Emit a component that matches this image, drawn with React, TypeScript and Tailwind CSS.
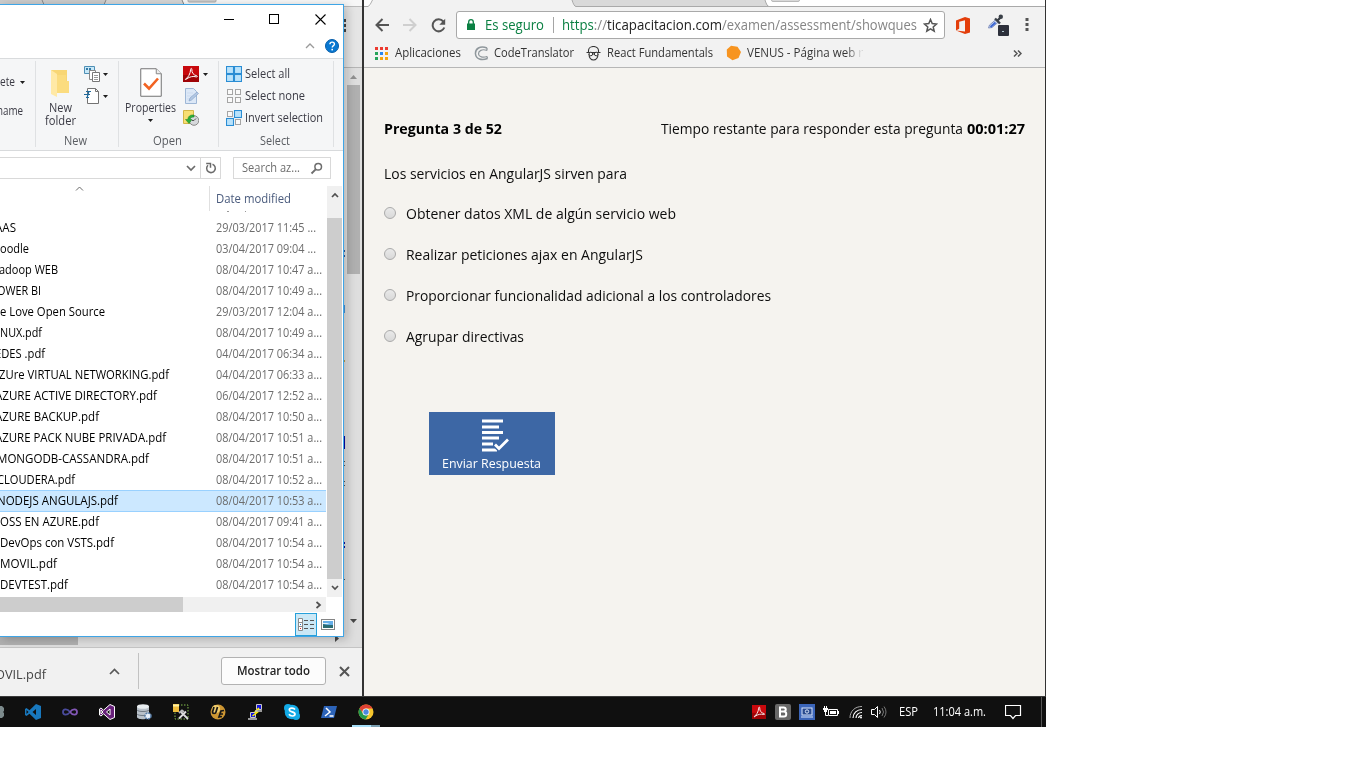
import React, { useLayoutEffect, useRef } from "react";

/* One line of text condensed or widened to fill its box. */
function T({ className = "", children }: { className?: string; children: React.ReactNode }) {
  const box = useRef<HTMLSpanElement>(null);
  const inner = useRef<HTMLSpanElement>(null);
  useLayoutEffect(() => {
    const b = box.current;
    const i = inner.current;
    if (!b || !i) return;
    i.style.transform = "none";
    const n = i.getBoundingClientRect().width;
    if (n > 0) i.style.transform = `scaleX(${b.getBoundingClientRect().width / n})`;
  });
  return (
    <span ref={box} className={`block shrink-0 whitespace-nowrap ${className}`}>
      <span ref={inner} className="inline-block origin-left align-top">{children}</span>
    </span>
  );
}

type Row = { name: string; cls: string; date: string; short?: boolean; selected?: boolean };

const rows: Row[] = [
  { name: "AAS", cls: "-ml-[5px] w-[21px]", date: "29/03/2017 11:45 ...", short: true },
  { name: "oodle", cls: "w-[29px]", date: "03/04/2017 09:04 ...", short: true },
  { name: "adoop WEB", cls: "-ml-[1px] w-[59px]", date: "08/04/2017 10:47 a..." },
  { name: "OWER BI", cls: "-ml-[3px] w-[44px]", date: "08/04/2017 10:49 a..." },
  { name: "e Love Open Source", cls: "w-[105px]", date: "29/03/2017 12:04 a..." },
  { name: "INUX.pdf", cls: "-ml-[3px] w-[45px]", date: "08/04/2017 10:49 a..." },
  { name: "EDES .pdf", cls: "-ml-[5px] w-[50px]", date: "04/04/2017 06:34 a..." },
  { name: "ZUre VIRTUAL NETWORKING.pdf", cls: "-ml-[1px] w-[170px]", date: "04/04/2017 06:33 a..." },
  { name: "AZURE ACTIVE DIRECTORY.pdf", cls: "-ml-[5px] w-[162px]", date: "06/04/2017 12:52 a..." },
  { name: "AZURE BACKUP.pdf", cls: "-ml-[5px] w-[104px]", date: "08/04/2017 10:50 a..." },
  { name: "AZURE PACK NUBE PRIVADA.pdf", cls: "-ml-[5px] w-[171px]", date: "08/04/2017 10:51 a..." },
  { name: "MONGODB-CASSANDRA.pdf", cls: "-ml-[3px] w-[152px]", date: "08/04/2017 10:51 a..." },
  { name: "CLOUDERA.pdf", cls: "-ml-[3px] w-[78px]", date: "08/04/2017 10:52 a..." },
  { name: "NODEJS ANGULAJS.pdf", cls: "-ml-[3px] w-[121px]", date: "08/04/2017 10:53 a...", selected: true },
  { name: "OSS EN AZURE.pdf", cls: "w-[99px]", date: "08/04/2017 09:41 a..." },
  { name: "DevOps con VSTS.pdf", cls: "w-[114px]", date: "08/04/2017 10:54 a..." },
  { name: "MOVIL.pdf", cls: "w-[57px]", date: "08/04/2017 10:54 a..." },
  { name: "DEVTEST.pdf", cls: "w-[68px]", date: "08/04/2017 10:54 a..." },
];

function Caret({ className = "" }: { className?: string }) {
  return (
    <svg className={`shrink-0 ${className}`} width="5" height="3" viewBox="0 0 5 3">
      <path d="M0 0h5L2.5 3z" fill="#1e1e1e" />
    </svg>
  );
}

function PdfIcon({ size = 16 }: { size?: number }) {
  return (
    <svg className="shrink-0" width={size} height={size} viewBox="0 0 16 16">
      <rect width="16" height="16" fill="#c8090d" />
      <rect y="9" width="16" height="7" fill="#9f0306" />
      <path d="M2.4 13.2c2.8-1.6 5-5.500 5.200-9.600.1-1.700 1.400-1.500 1.300.1-.3 2.700 1.500 5.500 4.900 6.100 1 .3.600 1.400-.5 1.100-3.200-1-6.700-.2-9.300 1.800-1 .9-2.100.9-1.600.5Z" fill="none" stroke="#fff" strokeWidth="1" />
    </svg>
  );
}

function SelectIcon({ kind }: { kind: "all" | "none" | "invert" }) {
  const on = [kind === "all", kind !== "none", kind !== "none", kind === "all"];
  return (
    <svg className="shrink-0" width="16" height="16" viewBox="0 0 16 16">
      {on.map((v, i) => {
        const x = (i % 2) * 8;
        const y = Math.floor(i / 2) * 8;
        return v ? (
          <rect key={i} x={x + 0.5} y={y + 0.5} width="7" height="7" fill="#b9e2fb" stroke="#2a8dd4" strokeWidth="1.100" />
        ) : (
          <rect key={i} x={x + 1.5} y={y + 1.5} width="5" height="5" fill="#fafafa" stroke="#a5a5a5" />
        );
      })}
    </svg>
  );
}

function Ribbon() {
  return (
    <div className="flex h-[92px] shrink-0 border-b border-[#d8dadc] bg-[#f5f6f7] pt-[2px] text-[12px] leading-[16px] text-[#3b3b45]">
      <div className="h-[86px] w-[36px] shrink-0 border-r border-[#dfe1e3] pt-[13px]">
        <div className="flex items-center">
          <T className="w-[15px]">ete</T>
          <Caret className="ml-[5px]" />
        </div>
        <T className="mt-[13px] -ml-[3px] w-[26px]">name</T>
      </div>
      <div className="flex h-[86px] w-[83px] shrink-0 flex-col border-r border-[#dfe1e3]">
        <div className="flex h-[72px] shrink-0">
          <div className="flex w-[48px] flex-col items-center pt-[8px]">
            <svg className="shrink-0" width="20" height="29" viewBox="0 0 20 29">
              <path d="M1 1h16v11h2v12H1z" fill="#f8d675" />
              <path d="M1 1l6 4v23l-6-3z" fill="#ffe9a6" />
              <path d="M7 6h9v6h3v12H7z" fill="#fbdc7f" />
            </svg>
            <T className="mt-[3px] w-[23px] leading-[13px]">New</T>
            <T className="w-[31px] leading-[13px]">folder</T>
          </div>
          <div className="flex flex-col gap-[6px] pt-[5px]">
            <div className="flex items-center gap-[3px]">
              <svg width="16" height="16" viewBox="0 0 16 16">
                <path d="M.5.5h10v7H.5z" fill="#c7e8f8" stroke="#4e8fb5" />
                <path d="M2 3h2M6 2v3" stroke="#347ba7" strokeWidth="2" />
                <path d="M5.500 4.500h6v9h-6z" fill="#fff" stroke="#888" />
                <path d="M8.500 6.500h7v9h-7z" fill="#fff" stroke="#777" />
                <path d="M10 9.500h4M10 11.500h4M10 13.500h4" stroke="#999" />
              </svg>
              <Caret />
            </div>
            <div className="flex items-center gap-[3px]">
              <svg width="16" height="16" viewBox="0 0 16 16">
                <path d="M3.500.5h8l3 3v12h-11z" fill="#fff" stroke="#737373" />
                <path d="M11.500.5v3h3" fill="none" stroke="#737373" />
                <path d="M2 3.500h5M0 6.500h6M2 9.500h3M5 3l-2 7" stroke="#20699a" strokeWidth="1.200" />
              </svg>
              <Caret />
            </div>
          </div>
        </div>
        <T className="ml-[28px] w-[23px] text-[#5a5d62]">New</T>
      </div>
      <div className="flex h-[86px] w-[100px] shrink-0 flex-col border-r border-[#dfe1e3]">
        <div className="flex h-[72px] shrink-0">
          <div className="flex w-[64px] flex-col items-center pt-[7px] pr-[1px]">
            <svg className="shrink-0" width="22" height="29" viewBox="0 0 22 29">
              <path d="M.75.75h15.500l5 5v22.500H.75z" fill="#fff" stroke="#737373" />
              <path d="M16.250.75v5h5" fill="#eee" stroke="#888" />
              <path d="M4 15.500l5 5L18 10.500" fill="none" stroke="#f26322" strokeWidth="2.600" />
            </svg>
            <T className="mt-[3px] w-[51px]">Properties</T>
            <Caret className="mt-[3px]" />
          </div>
          <div className="flex flex-col gap-[6px] pt-[5px]">
            <div className="flex items-center gap-[4px]">
              <PdfIcon />
              <Caret />
            </div>
            <svg width="16" height="16" viewBox="0 0 16 16">
              <path d="M2.500.5h8l3 3v12h-11z" fill="#dce8f7" stroke="#9eb7d6" />
              <path d="M4 5h6M4 8h5M4 11h3" stroke="#cddbef" />
              <path d="M6 13l1-3 7-6 1.500 1.500L8.500 12z" fill="#b3c8e4" stroke="#89a5c8" strokeWidth=".7" />
            </svg>
            <svg width="16" height="16" viewBox="0 0 16 16">
              <path d="M.5.5h10v13H.5z" fill="#f7df73" stroke="#d4b646" />
              <circle cx="11" cy="10.500" r="4.800" fill="#d6d9dc" stroke="#888" />
              <path d="M11 10.500l2-2M11 10.500H9" stroke="#555" />
              <path d="M11 5C7 4.500 5 6.500 4.800 9.500H2.500l3.500 4 3-4H7.200c0-1.700 1.500-2.500 3.800-2.500z" fill="#2dae3a" stroke="#148122" strokeWidth=".5" />
            </svg>
          </div>
        </div>
        <T className="ml-[34px] w-[29px] text-[#5a5d62]">Open</T>
      </div>
      <div className="h-[86px] w-[115px] shrink-0 border-r border-[#dfe1e3] pl-[7px]">
        <div className="flex h-[72px] flex-col gap-[6px] pt-[5px]">
          <div className="flex items-center gap-[3px]"><SelectIcon kind="all" /><T className="w-[45px]">Select all</T></div>
          <div className="flex items-center gap-[3px]"><SelectIcon kind="none" /><T className="w-[60px]">Select none</T></div>
          <div className="flex items-center gap-[3px]"><SelectIcon kind="invert" /><T className="w-[78px]">Invert selection</T></div>
        </div>
        <T className="ml-[34px] w-[30px] text-[#5a5d62]">Select</T>
      </div>
    </div>
  );
}

function Explorer() {
  return (
    <div className="absolute top-[4px] left-0 flex h-[633px] w-[344px] flex-col overflow-hidden border-y border-r border-[#3fa5e6] bg-white shadow-[3px_2px_9px_rgba(0,0,0,0.22)]">
      <div className="flex h-[29px] shrink-0 justify-end pt-[8px] pr-[16px]">
        <svg width="103" height="13" viewBox="0 0 103 13">
          <path d="M0 6.500h10" stroke="#000" />
          <rect x="45.500" y="1.500" width="9" height="9" fill="none" stroke="#000" />
          <path d="M91.500 1.500l10 10M101.500 1.500l-10 10" stroke="#000" strokeWidth="1.100" />
        </svg>
      </div>
      <div className="flex h-[25px] shrink-0 items-center justify-end gap-[10px] border-b border-[#d9dbdd] pr-[4px]">
        <svg width="10" height="6" viewBox="0 0 10 6"><path d="M1 5l4-4 4 4" fill="none" stroke="#9a9a9a" strokeWidth="1.300" /></svg>
        <svg width="14" height="14" viewBox="0 0 14 14">
          <circle cx="7" cy="7" r="6.500" fill="#0878d2" stroke="#075da8" />
          <path d="M4.900 5.200c.2-2.800 4.500-2.700 4.500 0C9.400 6.700 7.200 6.700 7.200 8.600" fill="none" stroke="#fff" strokeWidth="1.400" />
          <rect x="6.400" y="9.800" width="1.600" height="1.600" fill="#fff" />
        </svg>
      </div>
      <Ribbon />
      <div className="flex h-[35px] shrink-0 pt-[6px]">
        <div className="flex h-[22px] w-[221px] border-y border-r border-[#d9d9d9]">
          <div className="flex w-[201px] items-center justify-end border-r border-[#d9d9d9] pr-[4px]">
            <svg width="10" height="7" viewBox="0 0 10 7"><path d="M1 1l4 4 4-4" fill="none" stroke="#6b6b6b" strokeWidth="1.700" /></svg>
          </div>
          <div className="flex flex-1 items-center justify-center">
            <svg width="12" height="12" viewBox="0 0 12 12">
              <path d="M7.500 2.300A4.300 4.300 0 1 1 3 3.200" fill="none" stroke="#6b6b6b" strokeWidth="1.500" />
              <path d="M1.200 1.500h4.300v4.300" fill="none" stroke="#6b6b6b" strokeWidth="1.500" />
            </svg>
          </div>
        </div>
        <div className="ml-[12px] flex h-[22px] w-[98px] items-center border border-[#d9d9d9] pl-[8px] text-[12px] leading-[16px] text-[#6d6d6d]">
          <T className="w-[58px]">Search az...</T>
          <svg className="ml-[10px]" width="13" height="13" viewBox="0 0 13 13">
            <circle cx="8.200" cy="4.800" r="3.300" fill="none" stroke="#6d6d6d" strokeWidth="1.500" />
            <path d="M5.700 7.300L1.500 11.500" stroke="#6d6d6d" strokeWidth="1.900" />
          </svg>
        </div>
      </div>
      <div className="flex h-[411px] shrink-0">
        <div className="flex w-[327px] flex-col">
          <div className="flex h-[25px] shrink-0">
            <div className="flex w-[210px] justify-end border-r border-[#e0e0e0] pr-[125px]">
              <svg width="9" height="5" viewBox="0 0 9 5"><path d="M1 4.500l3.500-3.500L8 4.500" fill="none" stroke="#6b6b6b" /></svg>
            </div>
            <T className="ml-[6px] w-[75px] pt-[5px] text-[12px] leading-[16px] text-[#4a5b7d]">Date modified</T>
          </div>
          <div className="flex h-[6px] shrink-0 items-start pl-[227px]">
            <svg width="22" height="2"><path d="M0 .5h2M18 .5h1" stroke="#999" /></svg>
          </div>
          <div className="flex h-[380px] shrink-0 flex-col">
            {rows.map((r) => (
              <div
                key={r.name}
                className={`flex h-[21px] w-[326px] shrink-0 items-center text-[12px] leading-[16px] ${r.selected ? "bg-[#cce8ff] shadow-[inset_0_1px_0_#99d1ff,0_1px_0_#99d1ff]" : ""}`}
              >
                <div className="w-[216px] overflow-hidden text-black"><T className={r.cls}>{r.name}</T></div>
                <T className={r.short ? "w-[100px] text-[#6d6d6d]" : "w-[106px] text-[#6d6d6d]"}>{r.date}</T>
              </div>
            ))}
          </div>
        </div>
        <div className="flex w-[15px] flex-col bg-[#f0f0f0]">
          <div className="flex h-[32px] justify-center pt-[6px]">
            <svg width="8" height="6" viewBox="0 0 8 6"><path d="M1 5l3-3 3 3" fill="none" stroke="#505050" strokeWidth="1.700" /></svg>
          </div>
          <div className="h-[361px] bg-[#cdcdcd]" />
          <div className="flex h-[18px] items-center justify-center">
            <svg width="8" height="6" viewBox="0 0 8 6"><path d="M1 1l3 3 3-3" fill="none" stroke="#505050" strokeWidth="1.700" /></svg>
          </div>
        </div>
      </div>
      <div className="flex h-[15px] w-[326px] shrink-0 items-center justify-between bg-[#f0f0f0]">
        <div className="h-[15px] w-[183px] bg-[#cdcdcd]" />
        <svg className="mr-[4px]" width="7" height="8" viewBox="0 0 7 8"><path d="M1.500 1l3.500 3-3.500 3" fill="none" stroke="#505050" strokeWidth="1.700" /></svg>
      </div>
      <div className="flex flex-1 items-center justify-end gap-[4px] pr-[7px]">
        <div className="flex h-[23px] w-[22px] items-center justify-center border border-[#26a0da] bg-[#cbe8f6]">
          <svg width="16" height="13" viewBox="0 0 16 13">
            <path d="M.5.5h4v12h-4zM.5 4.500h4M.5 8.500h4" fill="#fff" stroke="#8a8a8a" />
            <path d="M6 2.500h4M12 2.500h4M6 6.500h4M12 6.500h4M6 10.500h4M12 10.500h4" stroke="#555" />
            <path d="M2 6.500h1" stroke="#27c" /><path d="M2 10.500h1" stroke="#d22" />
          </svg>
        </div>
        <svg className="mr-px" width="14" height="11" viewBox="0 0 14 11">
          <rect x=".5" y=".5" width="13" height="10" fill="#fff" stroke="#858585" />
          <rect x="2" y="2" width="10" height="7" fill="#65aee8" />
          <path d="M2 5l4 1 6 0v3H2z" fill="#2b6c73" /><path d="M2 4h4l3 1H2z" fill="#e4f3fc" />
        </svg>
      </div>
    </div>
  );
}

function LeftPane() {
  return (
    <div className="relative flex h-[696px] w-[362px] flex-col overflow-hidden bg-[#f1f1f1]">
      <svg className="shrink-0" width="362" height="7" viewBox="0 0 362 7">
        <rect width="362" height="7" fill="#f7f7f7" />
        <path d="M0 0h182l3 7H0z" fill="#cbcbcb" />
        <path d="M106 0h76l3 7h-82z" fill="#d6d6d6" />
        <path d="M42 0l3 7M106 0l-3 7M182 0l3 7" stroke="#888" />
        <rect x="188" y="-4" width="28" height="6" rx="1" fill="#ccc" stroke="#aaa" />
        <path d="M185 6.500h177" stroke="#bbb" />
      </svg>
      <div className="flex h-[61px] shrink-0 justify-end border-b border-[#b5b5b5] bg-[#e5e5e5] pt-[12px] pr-[16px]">
        <svg width="3" height="14" viewBox="0 0 3 14"><path d="M0 0h3v3H0zM0 5h3v3H0zM0 10h3v3H0z" fill="#444" /></svg>
      </div>
      <div className="flex h-[562px] shrink-0 justify-end bg-[#e4e4e4]">
        <svg className="shrink-0" width="3" height="562" viewBox="0 0 3 562">
          <path d="M0 182h1v2H0zM0 187h1v2H0z" fill="#345ca0" />
          <path d="M0 237h1v8H0z" fill="#4a98df" />
          <path d="M0 368h1v13H0z" fill="#0606a8" />
          <path d="M0 393h1v1H0zM0 397h1v1H0zM0 413h1v1H0zM0 417h1v1H0zM0 511h1v1H0z" fill="#555" />
          <path d="M0 474h1v2H0zM0 478h1v2H0z" fill="#1111a0" />
          <path d="M0 292h1v2H0z" fill="#c6a64d" />
        </svg>
        <div className="flex w-[15px] flex-col items-center bg-[#dedede] pt-[7px] pr-[2px]">
          <svg width="7" height="4" viewBox="0 0 7 4"><path d="M0 4l3.500-4L7 4z" fill="#909090" /></svg>
          <div className="mt-[6px] h-[189px] w-[13px] bg-[#b0b0b0]" />
          <svg className="mt-[345px]" width="7" height="4" viewBox="0 0 7 4"><path d="M0 0h7L3.500 4z" fill="#484848" /></svg>
        </div>
      </div>
      <div className="flex h-[18px] shrink-0 items-end justify-between border-b border-[#c4c4c4] bg-[#dedede] pb-[2px]">
        <div className="h-[14px] w-[78px] bg-[#b0b0b0]" />
        <svg className="mr-[23px] mb-[3px]" width="4" height="7" viewBox="0 0 4 7"><path d="M0 0l4 3.500L0 7z" fill="#484848" /></svg>
      </div>
      <div className="flex flex-1 items-center bg-[#f1f1f1] pb-[2px]">
        <div className="w-[109px] overflow-hidden">
          <T className="-ml-[5px] w-[51px] pt-[5px] text-[13.5px] leading-[18px] text-[#444]">OVIL.pdf</T>
        </div>
        <svg width="11" height="7" viewBox="0 0 11 7"><path d="M1 6l4.500-4.500L10 6" fill="none" stroke="#585858" strokeWidth="1.700" /></svg>
        <div className="ml-[18px] h-[36px] w-px bg-[#c2c2c2]" />
        <div className="ml-[82px] flex h-[28px] w-[105px] items-center justify-center rounded-[3px] border border-[#b2b2b2] bg-[#fcfcfc]">
          <T className="w-[73px] text-[12px] leading-[16px] font-semibold text-[#222]">Mostrar todo</T>
        </div>
        <svg className="ml-[13px]" width="11" height="11" viewBox="0 0 11 11"><path d="M1 1l9 9M10 1l-9 9" stroke="#555" strokeWidth="2" /></svg>
      </div>
      <Explorer />
    </div>
  );
}

function BrowserChrome() {
  return (
    <div className="flex h-[68px] shrink-0 flex-col border-b border-[#b6b6b6] bg-[#f2f2f2]">
      <svg className="shrink-0" width="681" height="7" viewBox="0 0 681 7">
        <rect width="681" height="7" fill="#f2f2f2" />
        <path d="M0 0h9L6 6.500H0z" fill="#fff" />
        <path d="M0 6.500h4Q6 6 8.500 0" fill="none" stroke="#aaa" />
        <path d="M208 0h193l3 6.500H211z" fill="#d9d9d9" />
        <path d="M401 0h280v6.500H404z" fill="#fff" />
        <path d="M208 0q2 6.500 4 6.500H681M401 0q2 6.500 4 6.500" fill="none" stroke="#a9a9a9" />
        <rect x="407.500" y="-4" width="28" height="5.500" rx="1.500" fill="#d9d9d9" stroke="#b9b9b9" />
      </svg>
      <div className="flex h-[36px] shrink-0 items-center pl-[11px]">
        <svg width="14" height="14" viewBox="0 0 14 14"><path d="M14 7H2M7.500 1L1.500 7l6 6" fill="none" stroke="#555" strokeWidth="2" /></svg>
        <svg className="ml-[14px]" width="14" height="14" viewBox="0 0 14 14"><path d="M0 7h12M6.500 1l6 6-6 6" fill="none" stroke="#cfcfcf" strokeWidth="2" /></svg>
        <svg className="ml-[14px]" width="15" height="15" viewBox="0 0 15 15">
          <path d="M12.300 3.500A6 6 0 1 0 13.300 9.500" fill="none" stroke="#555" strokeWidth="2" />
          <path d="M14.200.8v6H8.300z" fill="#555" />
        </svg>
        <div className="ml-[10px] flex h-[28px] w-[489px] items-center rounded-[3px] border border-[#a9a9a9] bg-white text-[14.3px] leading-[20px]">
          <svg className="ml-[10px]" width="8" height="12" viewBox="0 0 8 12">
            <path d="M0 4.500h8V11H0z" fill="#0b8043" /><path d="M1.700 5V3a2.300 2.300 0 0 1 4.600 0v2" fill="none" stroke="#0b8043" strokeWidth="1.300" />
          </svg>
          <T className="ml-[10px] w-[59px] text-[#0b8043]">Es seguro</T>
          <div className="ml-[9px] h-[16px] w-px bg-[#a5a5a5]" />
          <T className="ml-[8px] w-[45px] text-[#858585]"><span className="text-[#0b8043]">https</span>://</T>
          <T className="w-[115px] text-[#222]">ticapacitacion.com</T>
          <T className="w-[195px] text-[#858585]">/examen/assessment/showques</T>
          <svg className="ml-[6px]" width="15" height="15" viewBox="0 0 15 15">
            <path d="M7.500 1.500l1.700 4.100 4.300.4-3.300 2.900 1 4.300-3.700-2.300-3.700 2.300 1-4.300L1.500 6l4.300-.4z" fill="none" stroke="#555" strokeWidth="1.500" />
          </svg>
        </div>
        <svg className="ml-[11px]" width="15" height="17" viewBox="0 0 15 17">
          <path d="M0 3.500L9 0l5 1.500v14L9 17 0 13.500l9 1V3.300L3.200 4.800v7L0 13.500z" fill="#e33e0b" />
        </svg>
        <svg className="ml-[16px]" width="22" height="22" viewBox="0 0 22 22">
          <path d="M1.500 14l1-3L9 5.500l2.500 2.500L5 13.500z" fill="#cbd7ef" stroke="#6c7fb5" strokeWidth=".8" />
          <path d="M3.500 13l5-4.500" stroke="#3f69d4" strokeWidth="2" />
          <path d="M8 4.500l5 5M10.500 6.500L14 3" stroke="#3a4048" strokeWidth="2.400" />
          <circle cx="13.800" cy="2.700" r="2.200" fill="#3a4048" />
          <rect x="11" y="11" width="11" height="11" rx="1" fill="#2d303b" /><path d="M15 17.500h2" stroke="#b1c8d0" />
        </svg>
        <svg className="ml-[16px]" width="4" height="14" viewBox="0 0 4 14"><path d="M.5 0h3v3h-3zM.5 5h3v3h-3zM.5 10h3v3h-3z" fill="#555" /></svg>
      </div>
      <div className="flex h-[20px] shrink-0 items-center pl-[11px] text-[12px] leading-[16px] text-[#333]">
        <svg width="13" height="13" viewBox="0 0 13 13">
          <path d="M0 0h3v3H0zM5 0h3v3H5zM10 0h3v3h-3z" fill="#ec3b30" />
          <path d="M0 5h3v3H0zM0 10h3v3H0z" fill="#27a35a" />
          <path d="M5 5h3v3H5z" fill="#2786ee" /><path d="M10 5h3v3h-3zM5 10h3v3H5zM10 10h3v3h-3z" fill="#f5a40c" />
        </svg>
        <T className="ml-[7px] w-[66px]">Aplicaciones</T>
        <svg className="ml-[13px]" width="15" height="15" viewBox="0 0 15 15">
          <path d="M13 2C6-1 1 3 1.500 8c.5 5 6 7 12 4.500" fill="none" stroke="#8f979c" strokeWidth="1.500" />
          <path d="M13 4.500C8 2.500 4.300 5 4.500 8c.3 3 4.500 4 8.500 2.500M13 2v2.500M13.500 12.500L13 10.500" fill="none" stroke="#8f979c" strokeWidth="1.200" />
        </svg>
        <T className="ml-[5px] w-[80px]">CodeTranslator</T>
        <svg className="ml-[12px]" width="15" height="15" viewBox="0 0 15 15">
          <path d="M2.500 6V4.500a5 4 0 0 1 10 0V6M.5 6.500h14M3 8c0 3.500 2 6 4.500 6S12 11.500 12 8" fill="none" stroke="#333" strokeWidth="1.100" />
          <circle cx="4.800" cy="8" r="1.800" fill="#fff" stroke="#333" /><circle cx="10.200" cy="8" r="1.800" fill="#fff" stroke="#333" />
          <path d="M6.500 8h2" stroke="#333" />
        </svg>
        <T className="ml-[6px] w-[106px]">React Fundamentals</T>
        <svg className="ml-[13px]" width="16" height="16" viewBox="0 0 16 16"><path d="M5 .8l6.500 1L15 7l-2.500 6-6 2.200L1 11.500 .8 4.500z" fill="#f79420" /></svg>
        <T className="ml-[5px] w-[116px]">
          <span className="bg-linear-to-r from-[#333] from-85% to-[#f2f2f2] bg-clip-text text-transparent">VENUS - Página web r</span>
        </T>
        <svg className="ml-[150px]" width="9" height="7" viewBox="0 0 9 7"><path d="M1 .5l3 3-3 3M5 .5l3 3-3 3" fill="none" stroke="#555" strokeWidth="1.500" /></svg>
      </div>
    </div>
  );
}

const answers = [
  { text: "Obtener datos XML de algún servicio web", w: "w-[270px]" },
  { text: "Realizar peticiones ajax en AngularJS", w: "w-[237px]" },
  { text: "Proporcionar funcionalidad adicional a los controladores", w: "w-[365px]" },
  { text: "Agrupar directivas", w: "w-[118px]" },
];

function RightPane() {
  return (
    <div className="flex h-[696px] w-[682px] flex-col border-r border-[#333] bg-[#f5f3ef]">
      <BrowserChrome />
      <div className="flex flex-1 flex-col pt-[49px] pl-[20px] text-[15px] leading-[22px] text-[#0d0d0d]">
        <div className="flex">
          <T className="w-[118px] font-bold text-black">Pregunta 3 de 52</T>
          <T className="ml-[159px] w-[302px]">Tiempo restante para responder esta pregunta</T>
          <T className="ml-[4px] w-[58px] font-bold text-black">00:01:27</T>
        </div>
        <T className="mt-[23px] w-[243px]">Los servicios en AngularJS sirven para</T>
        <div className="mt-[18px] flex flex-col gap-[19px]">
          {answers.map((a) => (
            <label key={a.text} className="flex items-center">
              <span className="mr-[10px] h-[12px] w-[12px] rounded-full border border-[#aaa] bg-linear-to-b from-[#e9e9e9] to-[#d9d9d9]" />
              <T className={a.w}>{a.text}</T>
            </label>
          ))}
        </div>
        <button className="mt-[65px] ml-[45px] flex h-[63px] w-[126px] flex-col items-center bg-[#3d67a5] pt-[7px] text-white">
          <svg className="ml-[7px] shrink-0" width="28" height="34" viewBox="0 0 28 34">
            <path d="M0 2h21M0 8h17M0 13.500h21M0 19h17M0 25h11M0 31h15" stroke="#fff" strokeWidth="3" />
            <path d="M13 26l4 4 9-9" fill="none" stroke="#3d67a5" strokeWidth="5" />
            <path d="M13 25.500l4 4 9-9" fill="none" stroke="#fff" strokeWidth="2.800" />
          </svg>
          <T className="mr-[1px] w-[99px] text-left text-[13.5px] leading-[20px]">Enviar Respuesta</T>
        </button>
      </div>
    </div>
  );
}

const apps: React.ReactNode[] = [
  <path key="a" d="M11 0l5 2v12l-5 2L4.500 9.800 1.500 12 0 11V5l1.500-1 3 2.200zM11 5L7.500 8l3.500 3zM1.500 6v4l2-2z" fill="#1878be" fillRule="evenodd" />,
  <g key="b">
    <path d="M8 8C5 4 1 5 1 8s4 4 7 0" fill="none" stroke="#4a4b9c" strokeWidth="1.800" />
    <path d="M8 8c3-4 7-3 7 0s-4 4-7 0" fill="none" stroke="#8257b5" strokeWidth="1.800" />
  </g>,
  <path key="c" d="M11 .5l4.500 2v11l-4.500 2L4.500 9.800 2 12 .5 11V5L2 4l2.500 2.200zM11 5L7.500 8l3.500 3zM2 6v4l2-2z" fill="#68217a" stroke="#fff" strokeWidth="1" fillRule="evenodd" />,
  <g key="d">
    <path d="M1 2v11c0 3 12 3 12 0V2" fill="#b9c1c9" />
    <ellipse cx="7" cy="2.500" rx="6" ry="2.300" fill="#e8edf0" />
    <path d="M1 6c1 2 11 2 12 0M1 10c1 2 11 2 12 0" fill="none" stroke="#707a84" />
    <circle cx="12" cy="12" r="3" fill="#e7f0fa" stroke="#557ba5" strokeWidth="1.500" strokeDasharray="2 .8" />
  </g>,
  <g key="e">
    <path d="M2 1h13v14H2z" fill="none" stroke="#85bd4c" strokeDasharray="1.500 1.500" />
    <path d="M0 0h6v8H0z" fill="#efbd3d" /><path d="M0 1.500h6" stroke="#fff0a0" strokeWidth="2" />
    <path d="M6 14.500l7-7M8 8l7 7" stroke="#dcdcdc" strokeWidth="1.800" /><path d="M6 9l3-2.500 2 1.500" stroke="#bbb" strokeWidth="2" fill="none" />
  </g>,
  <g key="f">
    <circle cx="8" cy="8" r="7.500" fill="#cd9632" /><circle cx="6" cy="5" r="4" fill="#f1cd6d" />
    <path d="M4 3L2.500 8c0 2 3 2 3.500 0l1.500-5M14 6.500l-3 .5-2 6 3-.5M10 10h3" fill="none" stroke="#171717" strokeWidth="1.700" />
  </g>,
  <g key="g">
    <path d="M9.500.5h5v5h-5zM3.500 8.500h5v5h-5z" fill="#1212df" stroke="#c8c8c8" />
    <path d="M12 4L8.500 7.500l2 .5-5 4" fill="none" stroke="#fff100" strokeWidth="1.500" /><path d="M1 15h9M8 7h7" stroke="#c8c8c8" strokeWidth="1.500" />
  </g>,
  <g key="h">
    <circle cx="8" cy="8" r="7.300" fill="#12a9e5" /><circle cx="4" cy="4" r="4" fill="#12a9e5" /><circle cx="12" cy="12" r="4" fill="#12a9e5" />
    <path d="M11 5.500C9.500 3.500 5.300 3.800 5.300 6s5.700 1.500 5.700 4-4.500 2.700-6 .3" fill="none" stroke="#fff" strokeWidth="1.700" />
  </g>,
  <g key="i">
    <path d="M3 2h13l-3 12H0z" fill="#2c63b8" /><path d="M5 4l4 4-5 4M8.500 12h4" fill="none" stroke="#fff" strokeWidth="1.500" />
  </g>,
  <g key="j">
    <circle cx="8" cy="8" r="7.500" fill="#f5c52c" />
    <path d="M1.500 4.300A7.500 7.500 0 0 1 14.600 4.500H8a3.500 3.500 0 0 0-3.200 4.800z" fill="#df4034" />
    <path d="M1.500 4.300A7.500 7.500 0 0 0 7.500 15.500L11 9.700a3.500 3.500 0 0 1-6.200-.5z" fill="#23994f" />
    <circle cx="8" cy="8" r="3.500" fill="#fff" /><circle cx="8" cy="8" r="2.700" fill="#4b87df" />
  </g>,
];

function Taskbar() {
  return (
    <div className="flex h-[31px] border-t border-[#3a3a3a] bg-[#101010] text-white">
      <div className="flex w-[14px] shrink-0 items-center overflow-hidden">
        <svg width="4" height="12" viewBox="0 0 4 12"><path d="M0 0h2l2 2v3L3 6l1 1v3l-2 2H0z" fill="#7d8b8d" /></svg>
      </div>
      {apps.map((icon, i) => (
        <div key={i} className="flex w-[37px] shrink-0 flex-col items-center pt-[7px]">
          <svg className="shrink-0" width="16" height="16" viewBox="0 0 16 16">{icon}</svg>
          {i === apps.length - 1 && (
            <div className="mt-[5px] ml-[1px] flex h-[2px] w-[28px]">
              <div className="w-[19px] bg-[#a5def7]" />
              <div className="flex-1 bg-[#799eb0]" />
            </div>
          )}
        </div>
      ))}
      <div className="flex flex-1 items-center border-r border-[#555] pl-[368px]">
        <PdfIcon size={14} />
        <svg className="ml-[9px] shrink-0" width="16" height="16" viewBox="0 0 16 16">
          <rect width="16" height="16" rx="2" fill="#686868" />
          <path d="M5 3.500h3.500c3 0 3 4 0 4H5zm0 4h4c3 0 3 5 0 5H5z" fill="none" stroke="#fff" strokeWidth="2" />
        </svg>
        <svg className="ml-[8px] shrink-0" width="16" height="16" viewBox="0 0 16 16">
          <rect width="16" height="16" fill="#3b65b9" /><rect x="3" y="4" width="10" height="7" fill="#294a8e" stroke="#d9e6fb" />
          <circle cx="8" cy="7.500" r="1.700" fill="none" stroke="#d9e6fb" /><path d="M2 13h12" stroke="#d9e6fb" />
        </svg>
        <svg className="ml-[8px] shrink-0" width="16" height="12" viewBox="0 0 16 12">
          <path d="M5.500 3.500h9v6h-9z" fill="none" stroke="#fff" /><path d="M7 5h6v3H7zM15 5h1v3h-1zM0 2h5v2H0zM1 4h3v2H1z" fill="#fff" /><path d="M1.500 0v2M3.500 0v2M2.500 6v3.500H5" fill="none" stroke="#fff" />
        </svg>
        <svg className="ml-[10px] shrink-0" width="14" height="14" viewBox="0 0 14 14">
          <path d="M1 13C1 6 6 1.500 13 1.500" fill="none" stroke="#aaa" /><path d="M4 13c0-5 4-8.500 9-8.500M7 13c0-3 2.500-5.500 6-5.500M9.500 13c.3-1.500 1.500-2.500 3.500-2.500" fill="none" stroke="#fff" strokeWidth="1.200" /><circle cx="12" cy="12.500" r="1" fill="#fff" />
        </svg>
        <svg className="ml-[8px] shrink-0" width="16" height="14" viewBox="0 0 16 14">
          <path d="M.5 4.500h3l3-3v11l-3-3h-3z" fill="none" stroke="#fff" /><path d="M8.500 5q1.500 2 0 4" fill="none" stroke="#fff" /><path d="M11 3q3 4 0 8M13 1.500q4 5.500 0 11" fill="none" stroke="#777" />
        </svg>
        <T className="ml-[12px] w-[19px] text-[12px] leading-[16px]">ESP</T>
        <T className="ml-[15px] w-[53px] text-[12px] leading-[16px]">11:04 a.m.</T>
        <svg className="ml-[19px] shrink-0" width="17" height="16" viewBox="0 0 17 16"><path d="M.5 1.500h15v10h-5l-2.500 3-2.500-3h-5z" fill="none" stroke="#fff" strokeWidth="1.200" /></svg>
      </div>
      <div className="w-[4px] shrink-0" />
    </div>
  );
}

export default function App() {
  return (
    <div className="h-[768px] w-[1366px] overflow-hidden bg-white font-['Open_Sans','Noto_Sans',sans-serif]">
      <div className="flex h-[727px] w-[1046px] flex-col">
        <div className="flex h-[696px]">
          <LeftPane />
          <div className="w-[2px] shrink-0 bg-[#333]" />
          <RightPane />
        </div>
        <Taskbar />
      </div>
    </div>
  );
}
